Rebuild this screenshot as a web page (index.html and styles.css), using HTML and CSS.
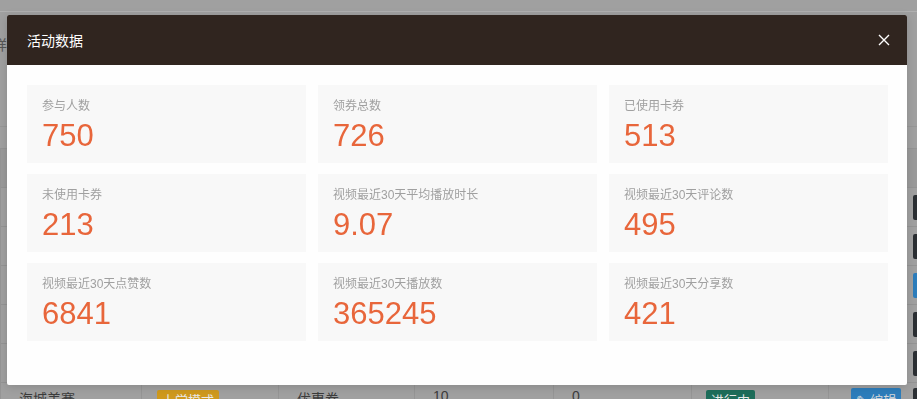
FILE: index.html
```html
<!DOCTYPE html>
<html>
<head>
  <meta charset="utf-8">
  <title>活动列表</title>
  <link rel="stylesheet" href="styles.css">
</head>
<body>

  <div class="page">
    <div class="topbar"></div>
    <div class="toolbar"><span class="crumb">详情</span></div>

    <table class="list">
      <thead>
        <tr>
          <th></th><th></th><th></th><th></th><th></th><th></th><th></th>
        </tr>
      </thead>
      <tbody>
        <tr>
          <td></td><td></td><td></td><td></td><td></td><td></td>
          <td class="ops"><span class="btn blue"></span><span class="btn dark">删除</span></td>
        </tr>
        <tr>
          <td></td><td></td><td></td><td></td><td></td><td></td>
          <td class="ops"><span class="btn blue"></span><span class="btn dark">删除</span></td>
        </tr>
        <tr>
          <td></td><td></td><td></td><td></td><td></td><td></td>
          <td class="ops"><span class="btn dark"></span><span class="btn blue">编辑</span></td>
        </tr>
        <tr>
          <td></td><td></td><td></td><td></td><td></td><td></td>
          <td class="ops"><span class="btn blue"></span><span class="btn dark">删除</span></td>
        </tr>
        <tr>
          <td></td><td></td><td></td><td></td><td></td><td></td>
          <td class="ops"><span class="btn blue"></span><span class="btn dark">删除</span></td>
        </tr>
        <tr class="last">
          <td>海城美赛</td>
          <td><span class="tag yellow">上学模式</span></td>
          <td>优惠券</td><td>10</td><td>0</td>
          <td><span class="tag green">进行中</span></td>
          <td class="ops"><span class="btn blue">✎ 编辑</span><span class="btn dark">删除</span></td>
        </tr>
      </tbody>
    </table>
  </div>

  <!-- 弹窗：活动数据 -->
  <div class="dialog">
    <div class="dialog-head">
      <span class="dialog-title">活动数据</span>
      <span class="close">
        <svg width="12" height="12" viewBox="0 0 12 12">
          <path d="M1 1 L11 11 M11 1 L1 11" stroke="#fff" stroke-width="1.4" fill="none"/>
        </svg>
      </span>
    </div>
    <div class="dialog-body">
      <div class="stat"><div class="stat-label">参与人数</div><div class="stat-value">750</div></div>
      <div class="stat"><div class="stat-label">领券总数</div><div class="stat-value">726</div></div>
      <div class="stat"><div class="stat-label">已使用卡券</div><div class="stat-value">513</div></div>
      <div class="stat"><div class="stat-label">未使用卡券</div><div class="stat-value">213</div></div>
      <div class="stat"><div class="stat-label">视频最近30天平均播放时长</div><div class="stat-value">9.07</div></div>
      <div class="stat"><div class="stat-label">视频最近30天评论数</div><div class="stat-value">495</div></div>
      <div class="stat"><div class="stat-label">视频最近30天点赞数</div><div class="stat-value">6841</div></div>
      <div class="stat"><div class="stat-label">视频最近30天播放数</div><div class="stat-value">365245</div></div>
      <div class="stat"><div class="stat-label">视频最近30天分享数</div><div class="stat-value">421</div></div>
    </div>
  </div>

</body>
</html>
```

FILE: styles.css
```css
  body {
    margin: 0;
    height: 399px;
    overflow: hidden;
    background-color: #a0a0a0;
    font-family: "Liberation Sans", "Noto Sans CJK SC", sans-serif;
  }

  .page {
    width: 1000px;
  }

  .topbar {
    height: 11px;
    border-bottom: 1px solid #b0b0b0;
  }

  .toolbar {
    height: 115px;
    padding-top: 22px;
    border-bottom: 1px solid #979797;
    box-sizing: border-box;
  }

  .crumb {
    display: inline-block;
    margin-left: -7px;
    font-size: 14px;
    color: #555;
  }

  .list {
    margin-top: 21px;
    border-collapse: collapse;
    font-size: 14px;
    color: #3c3c3c;
  }

  .list th,
  .list td {
    height: 38px;
    padding: 0 0 0 18px;
    border-top: 1px solid #949494;
    border-left: 1px solid #959595;
    text-align: left;
    font-weight: normal;
    white-space: nowrap;
  }

  .list th {
    background-color: #9a9a9a;
  }

  .list th:nth-child(1) { width: 122px; }
  .list th:nth-child(2) { width: 118px; }
  .list th:nth-child(3) { width: 117px; }
  .list th:nth-child(4) { width: 120px; }
  .list th:nth-child(5) { width: 119px; }
  .list th:nth-child(6) { width: 118px; }

  .list .last td {
    vertical-align: top;
    padding-top: 5px;
  }

  .list td.ops {
    padding-left: 22px;
  }

  .btn {
    display: inline-block;
    vertical-align: middle;
    width: 50px;
    height: 25px;
    line-height: 25px;
    margin-right: 12px;
    border-radius: 2px;
    font-size: 13px;
    color: #d8d8d8;
    text-align: center;
  }

  .btn.blue {
    background-color: #2d7dbb;
  }

  .btn.dark {
    background-color: #2b2f33;
  }

  .tag {
    display: inline-block;
    padding: 0 5px;
    height: 22px;
    line-height: 22px;
    margin-top: 2px;
    border-radius: 2px;
    font-size: 13px;
    color: #e8e8e8;
  }

  .tag.yellow {
    margin-left: -3px;
    background-color: #cf991d;
  }

  .tag.green {
    margin-left: -4px;
    background-color: #1d6d5a;
  }

.dialog {
  position: fixed;
  top: 15px;
  left: 7px;
  width: 900px;
  background-color: #fefefe;
  border-radius: 2px;
  box-shadow: 0 2px 10px rgba(0, 0, 0, 0.15);
  overflow: hidden;
}

.dialog-head {
  height: 50px;
  padding: 0 17px 0 20px;
  display: flex;
  align-items: center;
  justify-content: space-between;
  background-color: #30251f;
}

.dialog-title {
  font-size: 14px;
  color: #fff;
}

.close {
  width: 12px;
  height: 12px;
  display: flex;
}

.dialog-body {
  padding: 20px 19px 44px 20px;
  display: grid;
  grid-template-columns: repeat(3, 1fr);
  gap: 11px 12px;
}

.stat {
  height: 78px;
  box-sizing: border-box;
  padding: 13px 15px 0;
  background-color: #f8f8f8;
}

.stat-label {
  font-size: 12px;
  line-height: 17px;
  color: #a0a0a0;
}

.stat-value {
  margin-top: 3px;
  font-size: 31px;
  line-height: 35px;
  color: #e8663b;
}
```
